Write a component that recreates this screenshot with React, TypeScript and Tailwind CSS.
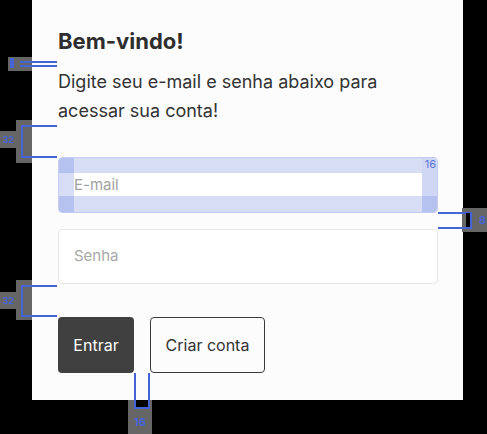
import React from "react";

const font = { fontFamily: "Inter, 'Liberation Sans', sans-serif" };

// measurement bracket overlays (design spec annotations)
const Marks = () => (
  <>
    {/* 8 between title and text */}
    <div className="absolute left-[8px] top-[57px] w-[24px] h-[14px] bg-[#666]" />
    <div className="absolute left-[10px] top-[58px] w-[4px] h-[10px] bg-[#4664d6] rounded-[1px]" />
    <div className="absolute left-[20px] top-[61px] w-[37px] h-[2px] bg-[#4664d6]" />
    <div className="absolute left-[20px] top-[65px] w-[37px] h-[2px] bg-[#4664d6]" />

    {/* 32 above email */}
    <div className="absolute left-[16px] top-[120px] w-[16px] h-[43px] bg-[#666]" />
    <div className="absolute left-0 top-[131px] w-[17px] h-[17px] bg-[#666] flex items-center justify-center text-[9px] font-bold text-[#4664d6]">32</div>
    <div className="absolute left-[21px] top-[125px] w-[36px] h-[2px] bg-[#4664d6]" />
    <div className="absolute left-[21px] top-[156px] w-[36px] h-[2px] bg-[#4664d6]" />
    <div className="absolute left-[21px] top-[125px] w-[2px] h-[33px] bg-[#4664d6]" />

    {/* right side gap */}
    <div className="absolute left-[462px] top-[208px] w-[25px] h-[24px] bg-[#666]" />
    <div className="absolute left-[438px] top-[212px] w-[34px] h-[2px] bg-[#4664d6]" />
    <div className="absolute left-[438px] top-[227px] w-[34px] h-[2px] bg-[#4664d6]" />
    <div className="absolute left-[470px] top-[212px] w-[2px] h-[17px] bg-[#4664d6]" />
    <div className="absolute left-[466px] top-[213px] w-[4px] h-[14px] bg-black" />
    <div className="absolute left-[479px] top-[213px] text-[11px] leading-[14px] font-bold text-[#4664d6]">8</div>

    {/* 32 above buttons */}
    <div className="absolute left-[16px] top-[280px] w-[16px] h-[40px] bg-[#666]" />
    <div className="absolute left-0 top-[292px] w-[17px] h-[17px] bg-[#666] flex items-center justify-center text-[9px] font-bold text-[#4664d6]">32</div>
    <div className="absolute left-[21px] top-[285px] w-[36px] h-[2px] bg-[#4664d6]" />
    <div className="absolute left-[21px] top-[315px] w-[36px] h-[2px] bg-[#4664d6]" />
    <div className="absolute left-[21px] top-[285px] w-[2px] h-[32px] bg-[#4664d6]" />

    {/* 16 between buttons */}
    <div className="absolute left-[128px] top-[400px] w-[24px] h-[34px] bg-[#666]" />
    <div className="absolute left-[134px] top-[373px] w-[2px] h-[36px] bg-[#4664d6]" />
    <div className="absolute left-[148px] top-[373px] w-[2px] h-[36px] bg-[#4664d6]" />
    <div className="absolute left-[134px] top-[407px] w-[16px] h-[2px] bg-[#4664d6]" />
    <div className="absolute left-[136px] top-[400px] w-[12px] h-[7px] bg-black" />
    <div className="absolute left-[131px] top-[415px] w-[18px] text-center text-[11px] leading-[14px] font-bold text-[#4664d6]">16</div>
  </>
);

// email field shown with its padding highlighted (3x3 grid: padding | content | padding)
const EmailField = () => (
  <div className="mt-[32px] w-[380px] h-[56px] rounded-[4px] border border-[#c5cdf0] overflow-hidden grid grid-cols-[15px_1fr_15px] grid-rows-[15px_23px_16px]">
    <div className="bg-[#b5c2ef]" />
    <div className="bg-[#d8ddf6]" />
    <div className="bg-[#d0d7f4] text-[11px] leading-[13px] text-[#5a74dc] text-right pr-[1px]">16</div>

    <div className="bg-[#d8ddf6]" />
    <div className="bg-white text-[15px] leading-[23px] text-[#a0a0a0]">E-mail</div>
    <div className="bg-[#d0d7f4]" />

    <div className="bg-[#b5c2ef]" />
    <div className="bg-[#d8ddf6]" />
    <div className="bg-[#b5c2ef]" />
  </div>
);

export default function App() {
  return (
    <div className="relative w-[487px] h-[434px] bg-black overflow-hidden" style={font}>
      <div className="ml-[32px] w-[431px] h-[400px] bg-[#fcfcfc] px-[26px] pt-[26px]">
        <h1 className="text-[22px] leading-[30px] font-bold text-[#2e2e2e]">Bem-vindo!</h1>
        <p className="mt-[11px] text-[18px] leading-[29px] text-[#333] w-[370px]">
          Digite seu e-mail e senha abaixo para acessar sua conta!
        </p>

        <EmailField />

        <div className="mt-[16px] w-[380px] h-[55px] rounded-[4px] border border-[#e6e6e6] bg-white flex items-center px-[15px] text-[15px] text-[#a8a8a8]">
          Senha
        </div>

        <div className="mt-[33px] flex gap-[16px]">
          <button className="h-[56px] w-[76px] rounded-[4px] bg-[#404040] text-white text-[16px]">Entrar</button>
          <button className="h-[56px] w-[115px] rounded-[4px] border border-[#3a3a3a] bg-[#fcfcfc] text-[#333] text-[16px]">Criar conta</button>
        </div>
      </div>
      <Marks />
    </div>
  );
}
